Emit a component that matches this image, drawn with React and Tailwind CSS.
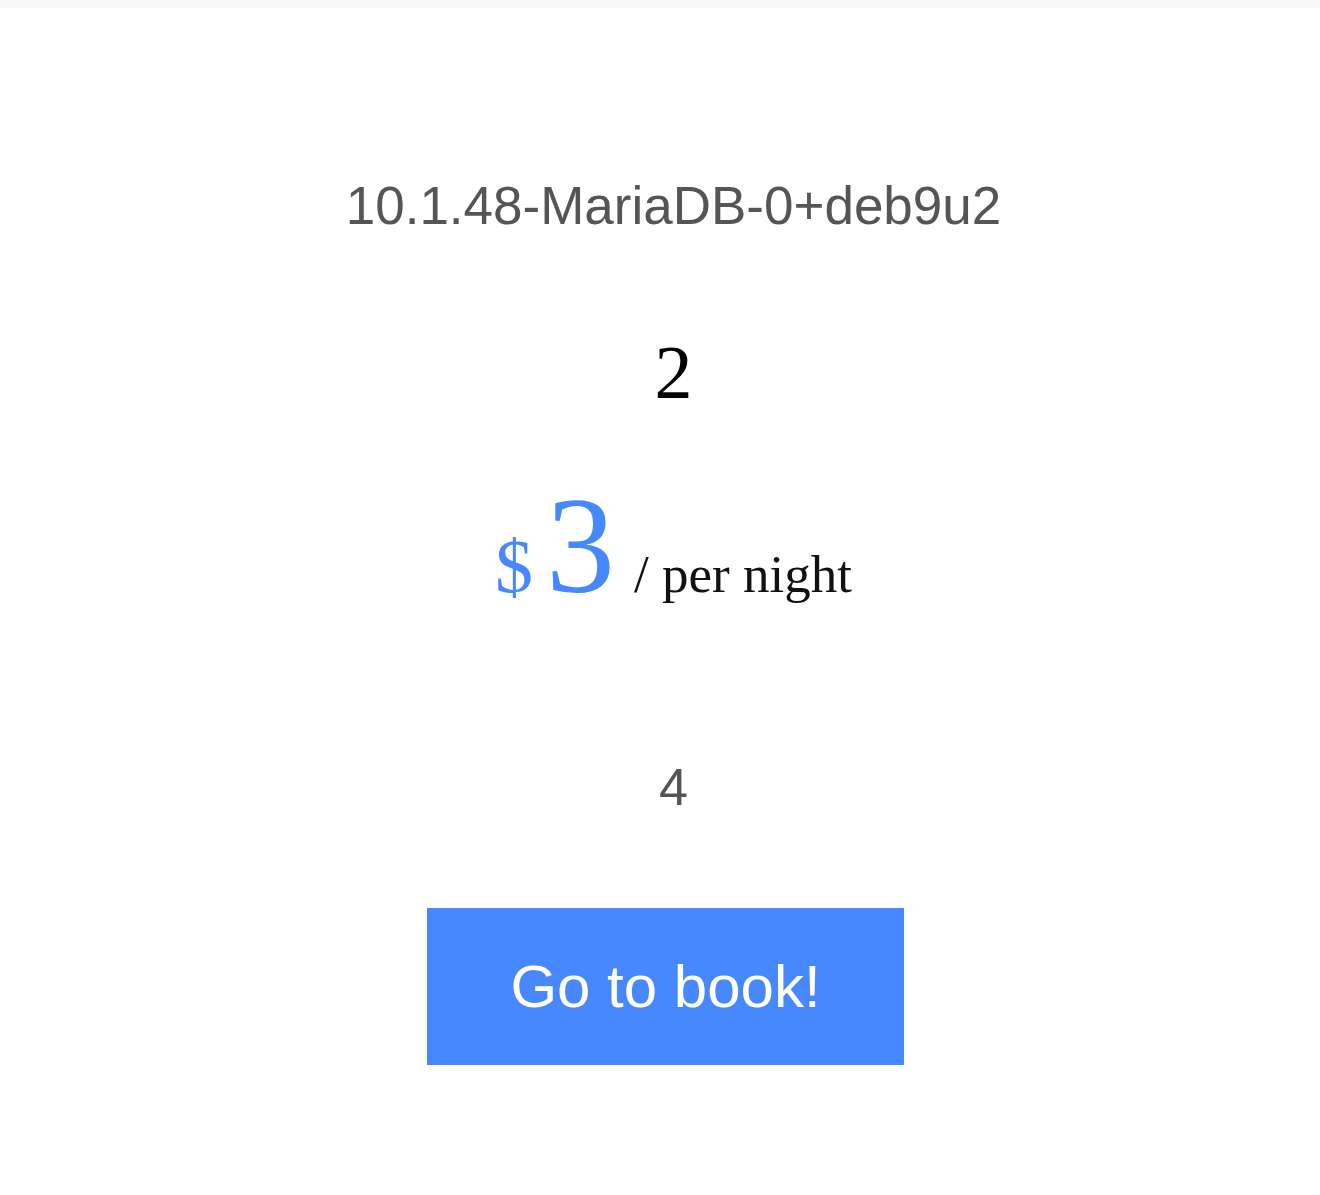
import React from 'react';

const sans = { fontFamily: '"Liberation Sans", Arial, sans-serif' };
const serif = { fontFamily: '"Liberation Serif", "Times New Roman", serif' };

export default function App() {
  return (
    <div className="min-h-[1195px] bg-white">
      <div className="h-[8px] bg-[#f9f9f9]" />
      <div className="flex flex-col items-center pl-[27px]">
        <p className="mt-[171px] text-[53px] leading-none text-[#555555]" style={sans}>
          10.1.48-MariaDB-0+deb9u2
        </p>
        <p className="mt-[102px] text-[76px] leading-none text-black" style={serif}>
          2
        </p>
        <div className="mt-[67px] flex items-baseline leading-none" style={serif}>
          <span className="text-[76px] text-[#4788fe]">$</span>
          <span className="ml-[13px] text-[138px] text-[#4788fe]">3</span>
          <span className="ml-[19px] text-[53px] text-[#111111]">/ per night</span>
        </div>
        <p className="mt-[146px] text-[52px] leading-none text-[#555555]" style={sans}>
          4
        </p>
        <button
          className="mt-[95px] mr-[16px] flex h-[157px] w-[477px] items-center justify-center bg-[#4788fe] text-[60px] leading-none text-white"
          style={sans}
        >
          Go to book!
        </button>
      </div>
    </div>
  );
}
